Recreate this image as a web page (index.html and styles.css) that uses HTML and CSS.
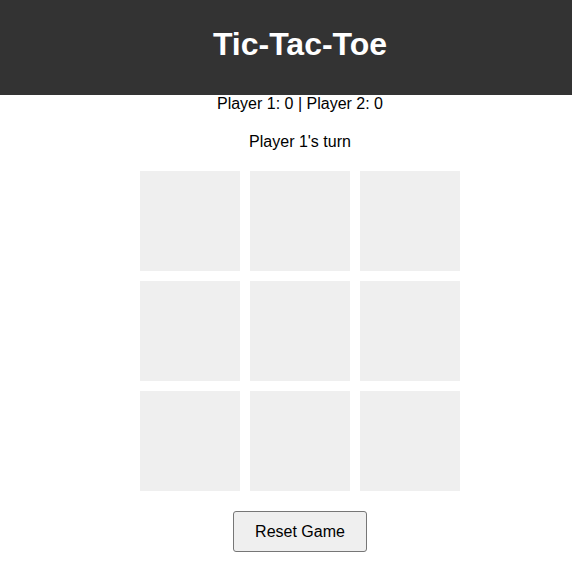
FILE: index.html
```html
<!DOCTYPE html>
<html lang="en">
<head>
<meta charset="utf-8">
<title>Tic-Tac-Toe</title>
<link rel="stylesheet" href="styles.css">
</head>
<body>
<div class="page">
<header class="header">
  <h1 class="title">Tic-Tac-Toe</h1>
</header>
<main class="game">
  <p class="score">Player 1: 0 | Player 2: 0</p>
  <p class="turn">Player 1's turn</p>
  <div class="board">
    <div class="cell"></div>
    <div class="cell"></div>
    <div class="cell"></div>
    <div class="cell"></div>
    <div class="cell"></div>
    <div class="cell"></div>
    <div class="cell"></div>
    <div class="cell"></div>
    <div class="cell"></div>
  </div>
  <button class="reset" type="button">Reset Game</button>
</main>
</div>
</body>
</html>
```

FILE: styles.css
```css
html, body {
  margin: 0;
  padding: 0;
  background: #ffffff;
}

body {
  font-family: "Liberation Sans", Arial, sans-serif;
  font-size: 16px;
  color: #000000;
}

.page {
  width: 600px;
}

.header {
  background: #333333;
  height: 95px;
  box-sizing: border-box;
  padding-bottom: 6px;
  display: flex;
  align-items: center;
  justify-content: center;
}

.title {
  margin: 0;
  color: #ffffff;
  font-size: 32px;
  font-weight: bold;
}

.game {
  display: flex;
  flex-direction: column;
  align-items: center;
}

.score {
  margin: 0;
}

.turn {
  margin: 20px 0 0;
}

.board {
  margin-top: 20px;
  display: grid;
  grid-template-columns: repeat(3, 100px);
  grid-template-rows: repeat(3, 100px);
  gap: 10px;
}

.cell {
  background: #efefef;
}

.reset {
  margin-top: 20px;
  height: 41px;
  box-sizing: border-box;
  font-family: "Liberation Sans", Arial, sans-serif;
  font-size: 16px;
  color: #000000;
  background: #efefef;
  border: 1px solid #767676;
  border-radius: 3px;
  padding: 0 21px;
}
```
